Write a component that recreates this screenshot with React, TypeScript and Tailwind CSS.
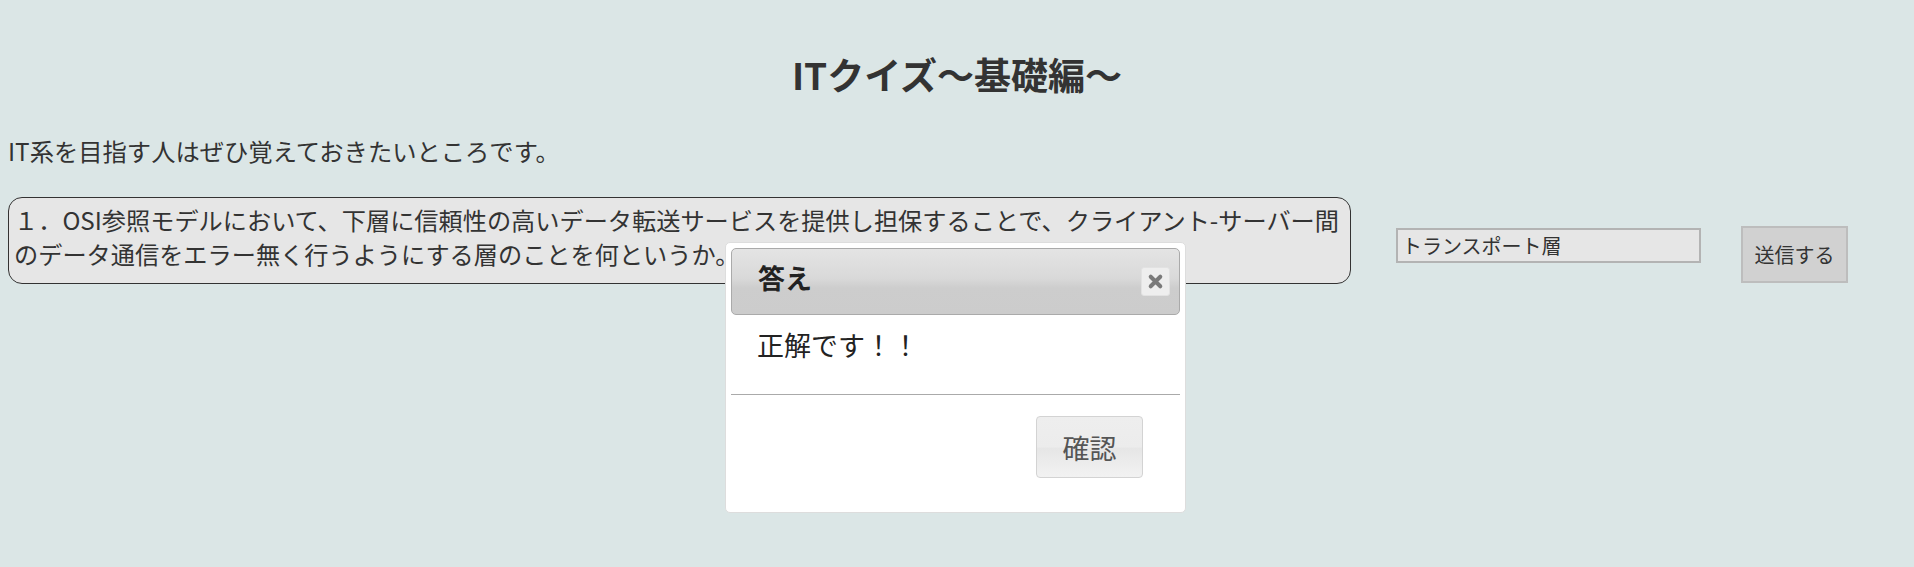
import { useState } from 'react'

function CloseIcon() {
  return (
    <svg viewBox="0 0 16 16" className="h-[17px] w-[17px]">
      <path d="M3.5 3.5 L12.5 12.5 M12.5 3.5 L3.5 12.5" stroke="#7a7a7a" strokeWidth="3.8" strokeLinecap="round" />
    </svg>
  )
}

function AnswerDialog({ onClose }: { onClose: () => void }) {
  return (
    <div className="absolute left-[725px] top-[242px] flex h-[271px] w-[461px] flex-col rounded-[5px] border border-[#dddddd] bg-white p-[5px]">
      {/* title bar */}
      <div className="flex h-[67px] shrink-0 items-start justify-between rounded-[5px] border border-[#aaaaaa] bg-[linear-gradient(#e4e4e4,#d9d9d9_45%,#cdcdcd_60%,#cccccc)] pl-[26px] pr-[9px] pt-[15px]">
        <span className="text-[27px] font-bold leading-none text-[#222222]">答え</span>
        <button
          type="button"
          onClick={onClose}
          className="-mt-[15px] flex h-[29px] w-[29px] items-center justify-center self-center rounded-[3px] border border-[#e2e2e2] bg-[#eeeeee]"
        >
          <CloseIcon />
        </button>
      </div>

      {/* content */}
      <div className="h-[80px] shrink-0 border-b border-[#aaaaaa] pl-[26px] pt-[16px]">
        <p className="text-[27px] leading-none text-[#222222]">正解です！！</p>
      </div>

      {/* buttons */}
      <div className="flex flex-1 items-start justify-end pr-[37px] pt-[21px]">
        <button
          type="button"
          onClick={onClose}
          className="flex h-[62px] w-[107px] items-center justify-center rounded-[4px] border border-[#d3d3d3] bg-[linear-gradient(#eeeeee,#ececec_50%,#e6e6e6_52%,#f2f2f2)] text-[27px] leading-none text-[#555555]"
        >
          確認
        </button>
      </div>
    </div>
  )
}

export default function App() {
  const [answer, setAnswer] = useState('トランスポート層')
  const [open, setOpen] = useState(true)

  return (
    <div className="relative min-h-screen bg-[#dbe6e6] px-2 font-['Noto_Sans_CJK_JP','Noto_Sans',sans-serif] text-[#333333]">
      <h1 className="pt-[53px] text-center text-[37px] font-bold leading-[42px]">ITクイズ～基礎編～</h1>

      <p className="mt-[39px] text-[24.3px] leading-[34px]">IT系を目指す人はぜひ覚えておきたいところです。</p>

      <div className="mt-[29px] flex items-start">
        <div className="w-[1343px] shrink-0 whitespace-nowrap rounded-[14px] border border-[#333333] bg-[#e6e6e6] pb-[12px] pl-[5px] pt-[5px] text-[24.2px] leading-[34px]">
          １．OSI参照モデルにおいて、下層に信頼性の高いデータ転送サービスを提供し担保することで、クライアント-サーバー間
          <br />
          のデータ通信をエラー無く行うようにする層のことを何というか。
        </div>

        <input
          type="text"
          value={answer}
          onChange={(e) => setAnswer(e.target.value)}
          className="ml-[45px] mt-[31px] h-[35px] w-[305px] border-2 border-[#b3b3b3] bg-[#e6e6e6] px-[4px] text-[20px] text-[#333333] outline-none"
        />

        <button
          type="button"
          onClick={() => setOpen(true)}
          className="ml-[40px] mt-[29px] h-[57px] w-[107px] border-2 border-[#bdbdbd] bg-[#d1d1d1] text-[20px] text-[#333333]"
        >
          送信する
        </button>
      </div>

      {open ? <AnswerDialog onClose={() => setOpen(false)} /> : null}
    </div>
  )
}
